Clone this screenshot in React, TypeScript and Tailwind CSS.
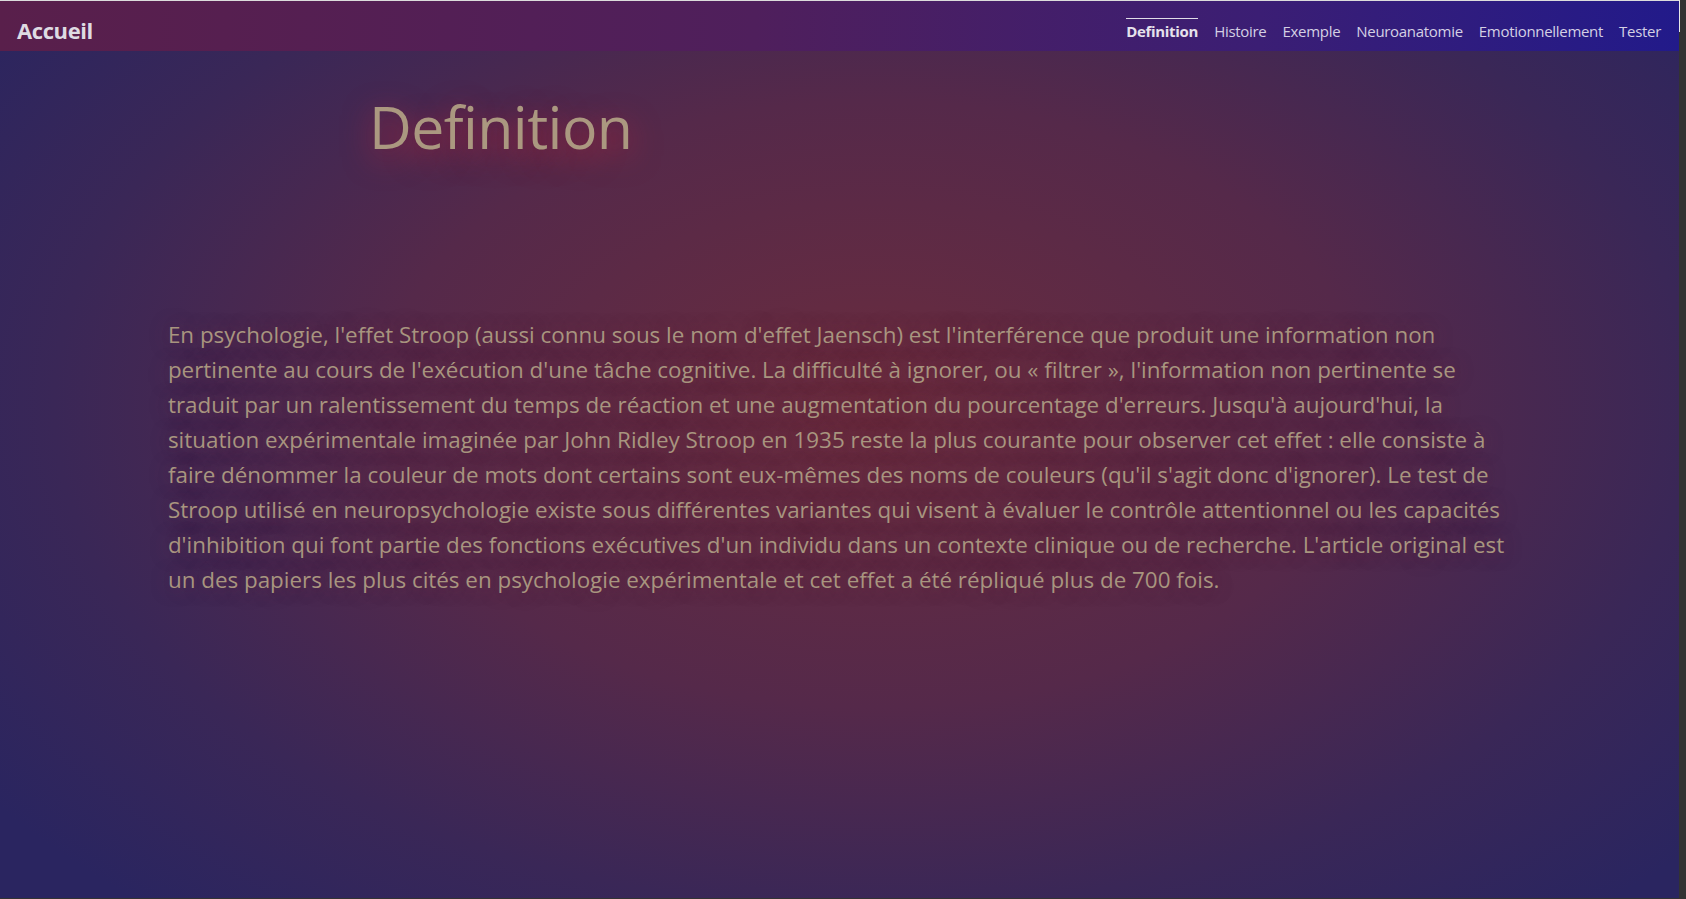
import React from "react";

const links = ["Definition", "Histoire", "Exemple", "Neuroanatomie", "Emotionnellement", "Tester"];

export default function App() {
  return (
    <div className="flex w-[1686px] h-[899px] bg-[#333333] overflow-hidden" style={{ fontFamily: '"Open Sans", "Noto Sans", sans-serif' }}>
      <div className="flex flex-col w-[1679px] h-[898px] bg-[radial-gradient(ellipse_65%_75%_at_52%_45%,#6a2c3e_0%,#55294a_45%,#3a2757_75%,#2a2560_100%)]">
        <nav className="flex items-center justify-between h-[51px] border-t border-[#dcdcdc] bg-[linear-gradient(90deg,#591f4b_0%,#4f1f5c_45%,#3b1e74_75%,#221a8a_100%)] pl-[17px] pr-[18px] pt-[8px]">
          <span className="text-[22px] font-bold text-[#dedbe2] tracking-[-0.4px] leading-none">Accueil</span>
          <ul className="flex items-center gap-[16px] text-[15px] text-[#d4d0e4] tracking-[-0.3px] -mt-[1px]">
            {links.map((l, i) => (
              <li key={l} className={"pt-[2px] border-t leading-[20px] " + (i === 0 ? "border-[#e0dde8] font-bold text-[#e6e2ec]" : "border-transparent")}>
                {l}
              </li>
            ))}
          </ul>
        </nav>
        <header className="pl-[369px] pt-[47px]">
          <h1 className="text-[59px] leading-[57px] font-medium text-[#ab9880] tracking-[-0.6px] [text-shadow:0_8px_30px_rgba(185,35,55,0.9)]">Definition</h1>
        </header>
        <main className="w-[80%] mx-auto mt-[162px]">
          <p className="text-[22.4px] leading-[35px] text-[#a8957f] [text-shadow:0_0_18px_rgba(120,50,70,0.5)]">
            En psychologie, l'effet Stroop (aussi connu sous le nom d'effet Jaensch) est l'interférence que produit une information non pertinente au cours de l'exécution d'une tâche cognitive. La difficulté à ignorer, ou « filtrer », l'information non pertinente se traduit par un ralentissement du temps de réaction et une augmentation du pourcentage d'erreurs. Jusqu'à aujourd'hui, la situation expérimentale imaginée par John Ridley Stroop en 1935 reste la plus courante pour observer cet effet : elle consiste à faire dénommer la couleur de mots dont certains sont eux-mêmes des noms de couleurs (qu'il s'agit donc d'ignorer). Le test de Stroop utilisé en neuropsychologie existe sous différentes variantes qui visent à évaluer le contrôle attentionnel ou les capacités d'inhibition qui font partie des fonctions exécutives d'un individu dans un contexte clinique ou de recherche. L'article original est un des papiers les plus cités en psychologie expérimentale et cet effet a été répliqué plus de 700 fois.
          </p>
        </main>
      </div>
      <div className="flex flex-col w-[7px]">
        <div className="w-[1px] h-[32px] bg-[#e8e8e8]" />
      </div>
    </div>
  );
}
